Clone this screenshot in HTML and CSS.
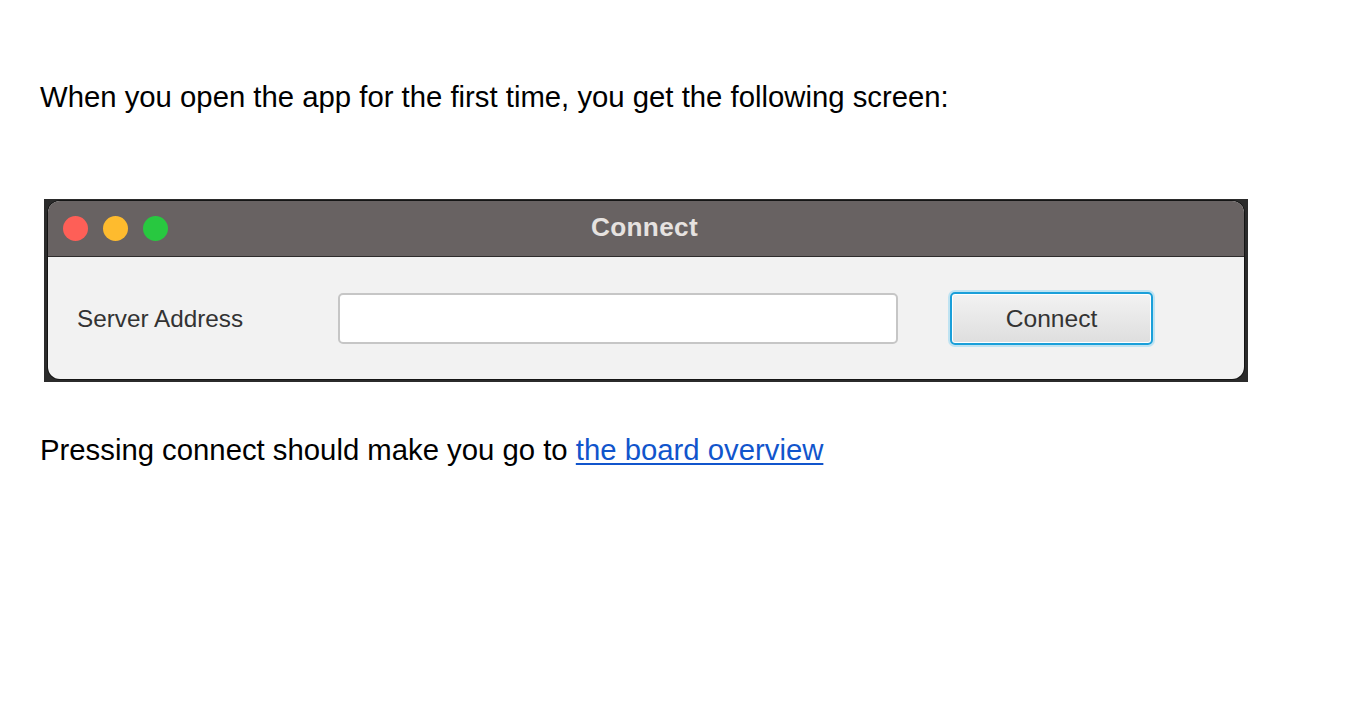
FILE: index.html
```html
<!DOCTYPE html>
<html>
<head>
<meta charset="utf-8">
<link rel="stylesheet" href="styles.css">
</head>
<body>
<div class="page">
  <p class="para first">When you open the app for the first time, you get the following screen:</p>
  <div class="shot">
    <div class="window">
      <div class="titlebar">
        <div class="lights">
          <span class="light red"></span>
          <span class="light yellow"></span>
          <span class="light green"></span>
        </div>
        <div class="title">Connect</div>
      </div>
      <div class="content">
        <label class="label">Server Address</label>
        <div class="input"></div>
        <div class="button">Connect</div>
      </div>
    </div>
  </div>
  <p class="para second">Pressing connect should make you go to <a class="link" href="#">the board overview</a></p>
</div>
</body>
</html>
```
FILE: styles.css
```css
html, body {
  margin: 0;
  padding: 0;
  background: #ffffff;
}
.page {
  padding-left: 40px;
  padding-top: 80px;
  font-family: "Liberation Sans", Arial, sans-serif;
  color: #000;
}
.para {
  margin: 0;
  font-size: 29.3px;
  line-height: 34px;
}
.second {
  margin-top: 51px;
}
.link {
  color: #1155cc;
  text-decoration: underline;
  text-underline-offset: 3px;
}
.shot {
  margin-top: 85px;
  margin-left: 4px;
  width: 1204px;
  height: 183px;
  background: #2b2b2b;
  padding: 2px 4px 3px 4px;
  box-sizing: border-box;
}
.window {
  height: 178px;
  border-radius: 12px;
  background: #f2f2f2;
  overflow: hidden;
  box-shadow: 0 0 0 1px #151515;
  display: flex;
  flex-direction: column;
}
.titlebar {
  height: 56px;
  flex: none;
  background: #686262;
  border-bottom: 1px solid #2e2c2c;
  position: relative;
  display: flex;
  align-items: center;
  justify-content: center;
  padding-bottom: 3px;
  box-sizing: border-box;
}
.lights {
  position: absolute;
  left: 15px;
  top: 15px;
  display: flex;
  gap: 15px;
}
.light {
  width: 25px;
  height: 25px;
  border-radius: 50%;
  display: block;
}
.red { background: #fe5f57; }
.yellow { background: #febb2e; }
.green { background: #28c840; }
.title {
  font-family: "Liberation Sans", Arial, sans-serif;
  font-weight: bold;
  font-size: 26.2px;
  color: #e6e2e0;
  letter-spacing: 0.3px;
  margin-left: -3px;
}
.content {
  flex: 1;
  display: flex;
  align-items: center;
  padding-left: 29px;
  padding-top: 1px;
}
.label {
  width: 261px;
  flex: none;
  font-size: 24.3px;
  color: #333333;
  font-family: "Liberation Sans", Arial, sans-serif;
}
.input {
  width: 560px;
  height: 51px;
  box-sizing: border-box;
  background: #ffffff;
  border: 2px solid #c6c6c6;
  border-radius: 5px;
  flex: none;
}
.button {
  margin-left: 52px;
  width: 203px;
  height: 53px;
  box-sizing: border-box;
  border: 2px solid #1a9fd9;
  border-radius: 5px;
  box-shadow: 0 0 0 2px #bfe3f2, inset 0 0 0 1px #ffffff;
  background: linear-gradient(#f2f2f2, #dedede);
  display: flex;
  align-items: center;
  justify-content: center;
  font-size: 24.6px;
  color: #333333;
  flex: none;
}
```
